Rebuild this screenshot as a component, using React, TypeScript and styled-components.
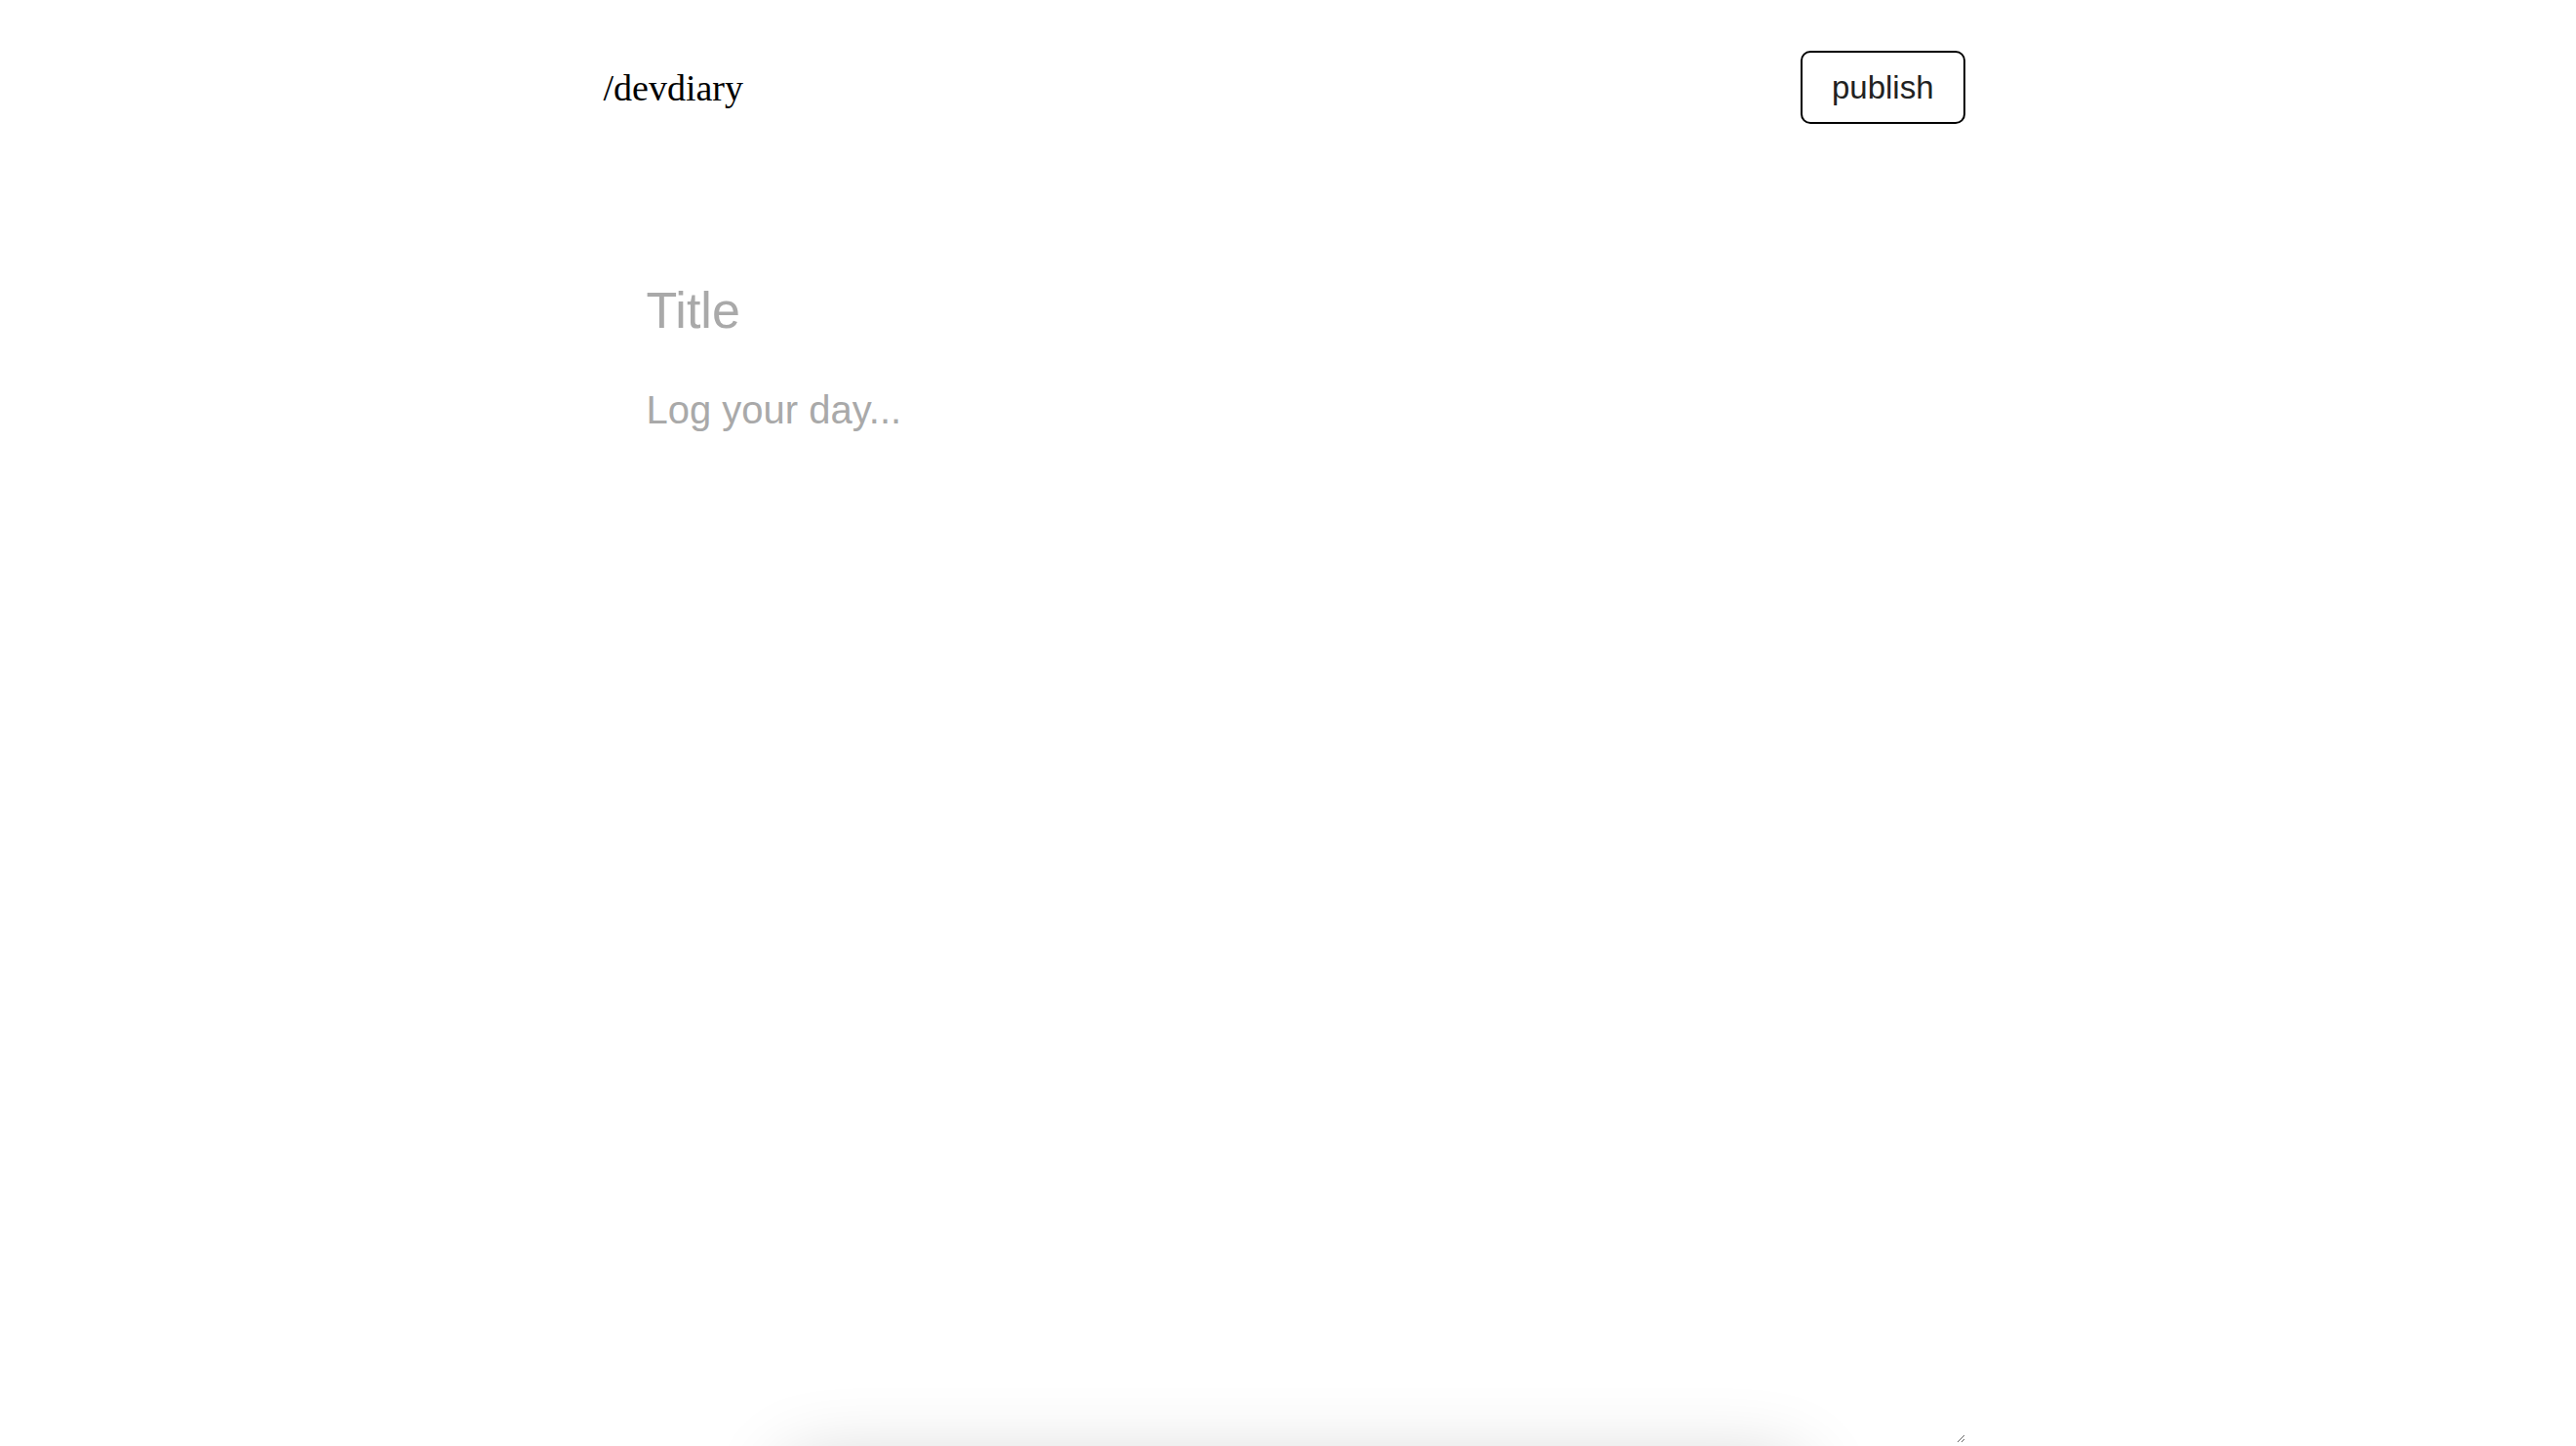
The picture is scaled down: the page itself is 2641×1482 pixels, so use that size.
import { useState } from "react";
import styled, { createGlobalStyle } from "styled-components";

const GlobalStyle = createGlobalStyle`
  html,
  body {
    margin: 0;
    background: #fff;
    overflow: hidden;
  }
`;

const App: React.FC = () => {
  const [title, setTitle] = useState("");
  const [body, setBody] = useState("");

  return (
    <>
      <GlobalStyle />
      <Page>
        <Header>
          <Logo>/devdiary</Logo>
          <PublishButton type="button">publish</PublishButton>
        </Header>
        <Editor>
          <TitleInput
            value={title}
            placeholder="Title"
            onChange={(e) => setTitle(e.target.value)}
          />
          <BodyArea
            value={body}
            placeholder="Log your day..."
            onChange={(e) => setBody(e.target.value)}
          />
        </Editor>
      </Page>
      {/* toolbar sits parked below the fold, only its shadow peeks in */}
      <Toolbar />
    </>
  );
};

const Page = styled.div`
  width: 1396px;
  margin-left: calc(50% - 702px);
`;

const Header = styled.header`
  display: flex;
  align-items: center;
  justify-content: space-between;
  padding-top: 52px;
`;

const Logo = styled.div`
  font-family: "Liberation Serif", "Times New Roman", serif;
  font-size: 38px;
  color: #000;
`;

const PublishButton = styled.button`
  height: 75px;
  padding: 0 30px;
  border: 2px solid #000;
  border-radius: 10px;
  background: #fff;
  color: #222;
  font-family: "Liberation Sans", Arial, sans-serif;
  font-size: 33px;
  cursor: pointer;
`;

const Editor = styled.main`
  display: flex;
  flex-direction: column;
  gap: 49px;
  padding-top: 161px;
`;

const fieldBase = `
  border: none;
  outline: none;
  background: transparent;
  padding: 0 44px;
  color: #222;
  font-family: "Liberation Sans", Arial, sans-serif;
  &::placeholder {
    color: #a9a9a9;
  }
`;

const TitleInput = styled.input`
  ${fieldBase}
  font-size: 52px;
  line-height: 60px;
`;

const BodyArea = styled.textarea`
  ${fieldBase}
  height: 1082px;
  font-size: 40px;
  line-height: 46px;
`;

const Toolbar = styled.div`
  position: fixed;
  left: calc(50% - 515px);
  bottom: -100px;
  width: 1040px;
  height: 82px;
  border-radius: 16px;
  background: #fff;
  box-shadow: 0 0 80px rgba(0, 0, 0, 0.2);
`;

export default App;
